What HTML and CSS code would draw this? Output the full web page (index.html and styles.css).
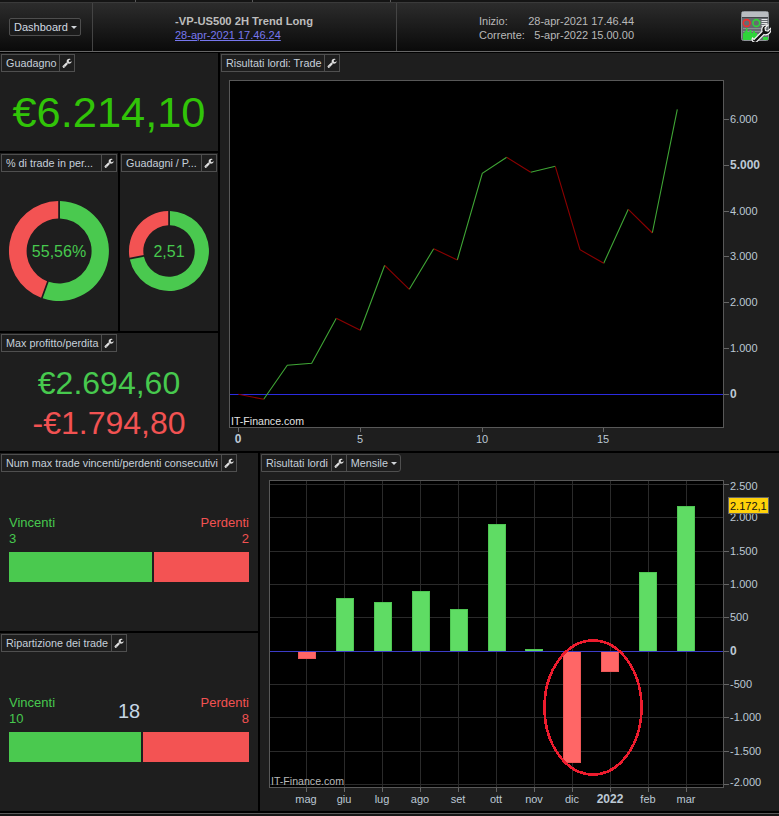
FILE: index.html
```html
<!DOCTYPE html>
<html lang="it">
<head>
<meta charset="utf-8">
<title>Dashboard</title>
<link rel="stylesheet" href="styles.css">
</head>
<body>
<svg class="defs" width="0" height="0" aria-hidden="true">
  <symbol id="wrench" viewBox="0 0 1792 1792">
    <path d="M448 1472q0-26-19-45t-45-19-45 19-19 45 19 45 45 19 45-19 19-45zm644-420l-682 682q-37 37-90 37-52 0-91-37l-106-108q-38-36-38-90 0-53 38-91l681-681q39 98 114.5 173.5t173.5 114.5zm634-435q0 39-23 106-47 134-164.5 217.5t-258.5 83.5q-185 0-316.5-131.5t-131.5-316.5 131.5-316.5 316.5-131.5q58 0 121.5 16.5t107.5 46.5q16 11 16 28t-16 28l-293 169v224l193 107q5-3 79-48.5t135.5-81 70.5-35.5q15 0 23.5 10t8.5 25z"/>
  </symbol>
</svg>
<div class="app">
  <div class="strip"><i class="strip-a"></i><i class="strip-b"></i><i class="strip-c"></i></div>
  <header class="header">
    <div class="dash-cell"><button class="dash-btn">Dashboard<span class="caret"></span></button></div>
    <div class="title-cell">
      <div class="title">-VP-US500 2H Trend Long</div>
      <a class="date-link" href="#">28-apr-2021 17.46.24</a>
    </div>
    <div class="info-cell">
      <div class="info">
        <span>Inizio:</span><span class="info-val">28-apr-2021 17.46.44</span>
        <span>Corrente:</span><span class="info-val">5-apr-2022 15.00.00</span>
      </div>
      <svg class="app-icon" width="30" height="31" viewBox="0 0 30 31">
        <rect x="0.5" y="0.5" width="27" height="29" rx="2" fill="#666b70" stroke="#8d9297"/>
        <rect x="1" y="1" width="26" height="5" fill="#b9bdc1"/>
        <rect x="1" y="6" width="26" height="1" fill="#43464a"/>
        <circle cx="5.700" cy="12" r="3.400" fill="none" stroke="#ef2f2f" stroke-width="1.600"/>
        <circle cx="15.300" cy="12" r="3.400" fill="none" stroke="#33d23c" stroke-width="1.600"/>
        <path d="M20.500 8.500h6M20.500 10.500h6M20.500 12.500h6M20.500 14.500h6" stroke="#e4e6e8" stroke-width="1"/>
        <path d="M2 17.500h24M2 20.500h24M2 23.500h24" stroke="#8b9095" stroke-width="1"/>
        <path d="M2 29v-7h1.500v-2h1.500v-3h1.500v4h2v-2h2v3h1.500v-2h2v2h2v7z" fill="#2fd43a"/>
        <path d="M22 29h5v-3h-5z" fill="#2fd43a"/>
        <path d="M13 28.500l8-8q-1-4 2-6 2-1 4-.5l-3 3 .5 2.500 2.500.5 3-3q.5 3-1.500 5-2.500 2.500-5.500 1.500l-7.500 7.500q-2 1-3.500-.5t-.5-3.500z" fill="#111" stroke="#f2f2f2" stroke-width="1.200"/>
      </svg>
    </div>
  </header>
  <div class="rule"></div>

  <main class="grid">
    <div class="row row-upper">
      <div class="col-left">
        <section class="panel panel-gain">
          <div class="tabs"><span class="tab-text">Guadagno</span><span class="tab-tool"><svg class="wrench"><use href="#wrench"/></svg></span></div>
          <div class="big-value">€6.214,10</div>
        </section>
        <div class="donut-row">
          <section class="panel panel-donut-a">
            <div class="tabs tabs-fill"><span class="tab-text">% di trade in per...</span><span class="tab-tool"><svg class="wrench"><use href="#wrench"/></svg></span></div>
            <div class="donut-body">
              <svg width="104" height="104" viewBox="0 0 104 104" class="donut">
                <path class="seg-green" d="M53 2.010A50 50 0 1 1 35.700 99.300L41.700 82.800A32.500 32.500 0 1 0 53 19.520Z"/>
                <path class="seg-red" d="M34.100 98.700A50 50 0 0 1 51.200 2.010L51.200 19.510A32.500 32.500 0 0 0 40.100 82.200Z"/>
                <text x="52" y="57.500" class="donut-text">55,56%</text>
              </svg>
            </div>
          </section>
          <section class="panel panel-donut-b">
            <div class="tabs tabs-fill"><span class="tab-text">Guadagni / P...</span><span class="tab-tool"><svg class="wrench"><use href="#wrench"/></svg></span></div>
            <div class="donut-body">
              <svg width="84" height="84" viewBox="0 0 84 84" class="donut">
                <path class="seg-green" d="M43 2.010A40 40 0 1 1 2.860 50.400L16.960 47.700A25.700 25.700 0 1 0 43 16.320Z"/>
                <path class="seg-red" d="M2.540 48.800A40 40 0 0 1 41.200 2.010L41.200 16.310A25.700 25.700 0 0 0 16.640 46.100Z"/>
                <text x="42" y="47.500" class="donut-text">2,51</text>
              </svg>
            </div>
          </section>
        </div>
        <section class="panel panel-max">
          <div class="tabs"><span class="tab-text">Max profitto/perdita</span><span class="tab-tool"><svg class="wrench"><use href="#wrench"/></svg></span></div>
          <div class="max-values">
            <div class="max-win">€2.694,60</div>
            <div class="max-loss">-€1.794,80</div>
          </div>
        </section>
      </div>

      <section class="panel panel-trade">
        <div class="tabs"><span class="tab-text">Risultati lordi: Trade</span><span class="tab-tool"><svg class="wrench"><use href="#wrench"/></svg></span></div>
        <svg class="chart" width="559" height="378" viewBox="220 73 559 378">
          <rect class="plot" x="229.500" y="80.500" width="494" height="347"/>
          <path class="base" d="M230 394.500H723"/>
          <path class="up" d="M263.700 399.300L287.300 365.300L311.700 363.300L336.300 318.300M360.300 330.300L384.700 265.300M409.300 289.300L433.700 248.700M457.300 260L482.300 173.300L506.700 157.300M530.700 172.300L555.300 166.300M603.700 263.300L628.300 209.300M652.300 233L677.300 109.300"/>
          <path class="down" d="M238.300 394.300L263.700 399.300M336.300 318.300L360.300 330.300M384.700 265.300L409.300 289.300M433.700 248.700L457.300 260M506.700 157.300L530.700 172.300M555.300 166.300L580 249.700L603.700 263.300M628.300 209.300L652.300 233"/>
          <path class="tick" d="M724 119.500h5M724 165.500h5M724 211.500h5M724 256.500h5M724 302.500h5M724 348.500h5M724 394.500h5M238.500 428v4M360.500 428v4M482.500 428v4M603.500 428v4"/>
          <text class="axis" x="730" y="123">6.000</text>
          <text class="axis axis-strong" x="730" y="169">5.000</text>
          <text class="axis" x="730" y="215">4.000</text>
          <text class="axis" x="730" y="260">3.000</text>
          <text class="axis" x="730" y="306">2.000</text>
          <text class="axis" x="730" y="352">1.000</text>
          <text class="axis axis-strong" x="730" y="398">0</text>
          <text class="axis axis-mid axis-strong" x="238" y="443">0</text>
          <text class="axis axis-mid" x="360" y="443">5</text>
          <text class="axis axis-mid" x="482" y="443">10</text>
          <text class="axis axis-mid" x="603" y="443">15</text>
          <text class="brand" x="231" y="425">IT-Finance.com</text>
        </svg>
      </section>
    </div>

    <div class="row row-lower">
      <div class="col-stats">
        <section class="panel panel-stat">
          <div class="tabs"><span class="tab-text">Num max trade vincenti/perdenti consecutivi</span><span class="tab-tool"><svg class="wrench"><use href="#wrench"/></svg></span></div>
          <div class="stat-body">
            <div class="stat-labels">
              <div class="stat-win">Vincenti<br>3</div>
              <div class="stat-loss">Perdenti<br>2</div>
            </div>
            <div class="stat-bar"><span class="bar-win bar-win-a"></span><span class="bar-loss"></span></div>
          </div>
        </section>
        <section class="panel panel-stat">
          <div class="tabs"><span class="tab-text">Ripartizione dei trade</span><span class="tab-tool"><svg class="wrench"><use href="#wrench"/></svg></span></div>
          <div class="stat-body">
            <div class="stat-labels">
              <div class="stat-win">Vincenti<br>10</div>
              <div class="stat-total">18</div>
              <div class="stat-loss">Perdenti<br>8</div>
            </div>
            <div class="stat-bar"><span class="bar-win bar-win-b"></span><span class="bar-loss"></span></div>
          </div>
        </section>
      </div>

      <section class="panel panel-monthly">
        <div class="tabs tabs-menu"><span class="tab-text">Risultati lordi</span><span class="tab-tool"><svg class="wrench"><use href="#wrench"/></svg></span><span class="tab-menu">Mensile<span class="caret"></span></span></div>
        <svg class="chart" width="519" height="338" viewBox="260 473 519 338">
          <rect class="plot" x="269.500" y="480.500" width="454" height="307"/>
          <path class="grid-line" d="M306.500 481V787M344.500 481V787M382.500 481V787M420.500 481V787M458.500 481V787M496.500 481V787M534.500 481V787M572.500 481V787M610.500 481V787M648.500 481V787M686.500 481V787M270 484.500H723M270 517.500H723M270 551.500H723M270 584.500H723M270 617.500H723M270 684.500H723M270 717.500H723M270 751.500H723M270 784.500H723"/>
          <rect class="bar-up" x="336.500" y="598.500" width="17" height="53"/>
          <rect class="bar-up" x="374.500" y="602.500" width="17" height="49"/>
          <rect class="bar-up" x="412.500" y="591.500" width="17" height="60"/>
          <rect class="bar-up" x="450.500" y="609.500" width="17" height="42"/>
          <rect class="bar-up" x="488.500" y="524.500" width="17" height="127"/>
          <rect class="bar-up" x="525.500" y="649.500" width="17" height="2"/>
          <rect class="bar-up" x="639.500" y="572.500" width="17" height="79"/>
          <rect class="bar-up" x="677.500" y="506.500" width="17" height="145"/>
          <rect class="bar-down" x="298.500" y="651.500" width="17" height="7"/>
          <rect class="bar-down" x="563.500" y="651.500" width="17" height="111"/>
          <rect class="bar-down" x="601.500" y="651.500" width="17" height="20"/>
          <path class="base-soft" d="M270 651.500H723"/>
          <path class="tick" d="M724 484.500h5M724 551.500h5M724 584.500h5M724 617.500h5M724 651.500h5M724 684.500h5M724 717.500h5M724 751.500h5M724 784.500h5M306.500 788v4M344.500 788v4M382.500 788v4M420.500 788v4M458.500 788v4M496.500 788v4M534.500 788v4M572.500 788v4M610.500 788v4M648.500 788v4M686.500 788v4"/>
          <ellipse class="circle" cx="593" cy="707.500" rx="48.500" ry="67"/>
          <text class="axis" x="730" y="490">2.500</text>
          <text class="axis" x="730" y="521">2.000</text>
          <text class="axis" x="730" y="555">1.500</text>
          <text class="axis" x="730" y="588">1.000</text>
          <text class="axis" x="730" y="621">500</text>
          <text class="axis axis-strong" x="730" y="655">0</text>
          <text class="axis" x="730" y="688">-500</text>
          <text class="axis" x="730" y="721">-1.000</text>
          <text class="axis" x="730" y="755">-1.500</text>
          <text class="axis" x="730" y="786">-2.000</text>
          <rect class="tag" x="728.500" y="497.500" width="40" height="16"/>
          <text class="tag-text" x="730" y="510">2.172,1</text>
          <text class="axis axis-mid" x="306" y="803">mag</text>
          <text class="axis axis-mid" x="344" y="803">giu</text>
          <text class="axis axis-mid" x="382" y="803">lug</text>
          <text class="axis axis-mid" x="420" y="803">ago</text>
          <text class="axis axis-mid" x="458" y="803">set</text>
          <text class="axis axis-mid" x="496" y="803">ott</text>
          <text class="axis axis-mid" x="534" y="803">nov</text>
          <text class="axis axis-mid" x="572" y="803">dic</text>
          <text class="axis axis-mid axis-year" x="610" y="803">2022</text>
          <text class="axis axis-mid" x="648" y="803">feb</text>
          <text class="axis axis-mid" x="686" y="803">mar</text>
          <text class="brand brand-dim" x="271" y="785">IT-Finance.com</text>
        </svg>
      </section>
    </div>
  </main>
  <div class="foot"></div>
</div>
</body>
</html>
```
FILE: styles.css
```css
* { box-sizing: border-box; }
html, body { margin: 0; padding: 0; background: #000; }
body { font: 11px "Liberation Sans", Arial, sans-serif; color: #c6d0da; overflow: hidden; }
.defs { position: absolute; }
.app { width: 779px; height: 816px; display: flex; flex-direction: column; overflow: hidden; }

/* top */
.strip { height: 3px; background: #141414; display: flex; border-bottom: 1px solid #3a3a3a; }
.strip i { display: block; height: 2px; border-right: 1px solid #5a5a5a; }
.strip-a { width: 136px; }
.strip-b { width: 117px; }
.strip-c { width: 138px; }
.header { height: 48px; display: flex; background: linear-gradient(#2c2c2c, #0a0a0a); }
.rule { height: 2px; background: #000; border-top: 1px solid #666; }
.dash-cell { width: 93px; border-right: 1px solid #444; padding: 15px 0 0 9px; }
.dash-btn { display: flex; align-items: center; width: 72px; height: 18px; padding: 0 0 0 4px; border: 1px solid #4e4e4e; border-radius: 2px; background: #1b1b1b; color: #d2dae2; font: 11px "Liberation Sans", Arial, sans-serif; }
.caret { display: inline-block; margin-left: 3px; border-left: 3.5px solid transparent; border-right: 3.5px solid transparent; border-top: 3.5px solid #d0d4d8; }
.title-cell { width: 304px; border-right: 1px solid #444; padding: 11px 0 0 82px; line-height: 14px; }
.title { font-weight: 700; font-size: 11.200px; color: #bdbdbd; }
.date-link { color: #7777ee; }
.info-cell { flex: 1; display: flex; padding-left: 82px; }
.info { display: grid; grid-template-columns: auto auto; width: 155px; height: 28px; margin-top: 11px; line-height: 14px; justify-content: space-between; color: #b9b9b9; }
.info-val { text-align: right; }
.app-icon { margin: 8px 0 0 107px; }

/* layout */
.grid { display: flex; flex-direction: column; gap: 2px; }
.row { display: flex; gap: 2px; }
.row-upper { height: 398px; }
.row-lower { height: 358px; }
.col-left { width: 218px; display: flex; flex-direction: column; gap: 2px; }
.donut-row { height: 178px; display: flex; gap: 2px; }
.col-stats { width: 258px; display: flex; flex-direction: column; gap: 2px; }
.panel { background: #1e1e1e; display: flex; flex-direction: column; min-width: 0; }
.panel-gain { height: 98px; }
.panel-donut-a { width: 118px; }
.panel-donut-b { width: 98px; }
.panel-max { height: 118px; }
.panel-trade, .panel-monthly { flex: 1; }
.panel-stat { height: 178px; }
.foot { height: 5px; margin-top: 0; background: #161616; border-top: 2px solid #000; box-shadow: inset 0 1px 0 #5a5a5a; }

/* tabs */
.tabs { display: flex; align-self: flex-start; height: 18px; margin: 1px; border: 1px solid #4f4f4f; font-size: 10.800px; line-height: 16px; color: #c6d0da; white-space: nowrap; }
.tabs-fill { align-self: stretch; }
.tabs-menu { border-radius: 0 3px 3px 0; }
.tab-text { padding: 0 3px 0 4px; flex: 1; }
.tab-tool { width: 15px; border-left: 1px solid #4f4f4f; display: flex; align-items: center; justify-content: center; }
.tab-menu { display: flex; align-items: center; padding: 0 3px 0 4px; border-left: 1px solid #4f4f4f; }
.wrench { width: 10px; height: 10px; fill: #e0e0e0; }

/* values */
.big-value { flex: 1; display: flex; align-items: center; justify-content: center; font-size: 43.400px; color: #31c408; }
.max-values { flex: 1; text-align: center; font-size: 32px; line-height: 40px; padding-top: 10px; }
.max-win { color: #47c94e; }
.max-loss { color: #f25252; }

/* donuts */
.donut-body { flex: 1; display: flex; align-items: center; justify-content: center; padding-bottom: 2px; }
.seg-green { fill: #4ac94f; }
.seg-red { fill: #f35353; }
.donut-text { fill: #47c94e; font-size: 16px; text-anchor: middle; }

/* stats */
.stat-body { padding: 42px 9px 0; }
.stat-labels { display: grid; grid-template-columns: 1fr auto 1fr; align-items: center; font-size: 13px; line-height: 16px; height: 32px; }
.stat-win { color: #47c94e; }
.stat-loss { color: #f25252; text-align: right; grid-column: 3; }
.stat-total { font-size: 20px; color: #c6d6e6; }
.stat-bar { display: flex; gap: 2px; height: 30px; margin-top: 5px; }
.bar-win { background: #4ac94f; }
.bar-loss { background: #f35353; flex: 1; }
.bar-win-a { width: 143px; }
.bar-win-b { width: 132px; }

/* charts */
.chart { display: block; }
.plot { fill: #000; stroke: #585858; stroke-width: 1; }
.base { stroke: #2b2be0; fill: none; }
.base-soft { stroke: #3c3cc8; fill: none; }
.up { stroke: #3fa535; stroke-width: 1.100; fill: none; }
.down { stroke: #8c0000; stroke-width: 1.100; fill: none; }
.tick { stroke: #666; fill: none; }
.axis { font-size: 11px; fill: #bcc8d4; }
.axis-mid { text-anchor: middle; }
.axis-strong { font-size: 12px; font-weight: 700; }
.axis-year { font-size: 12px; font-weight: 700; }
.brand { font-size: 10.600px; fill: #e2e2e2; }
.brand-dim { fill: #b8b8b8; }
.grid-line { stroke: #2a2a2a; fill: none; }
.bar-up { fill: #5fdc64; stroke: #4fc653; }
.bar-down { fill: #ff6666; stroke: #ef5858; }
.circle { fill: none; stroke: #ed1c2e; stroke-width: 2.600; shape-rendering: crispEdges; }
.tag { fill: #ffd20a; stroke: #666; }
.tag-text { font-size: 11px; fill: #111; }
```
